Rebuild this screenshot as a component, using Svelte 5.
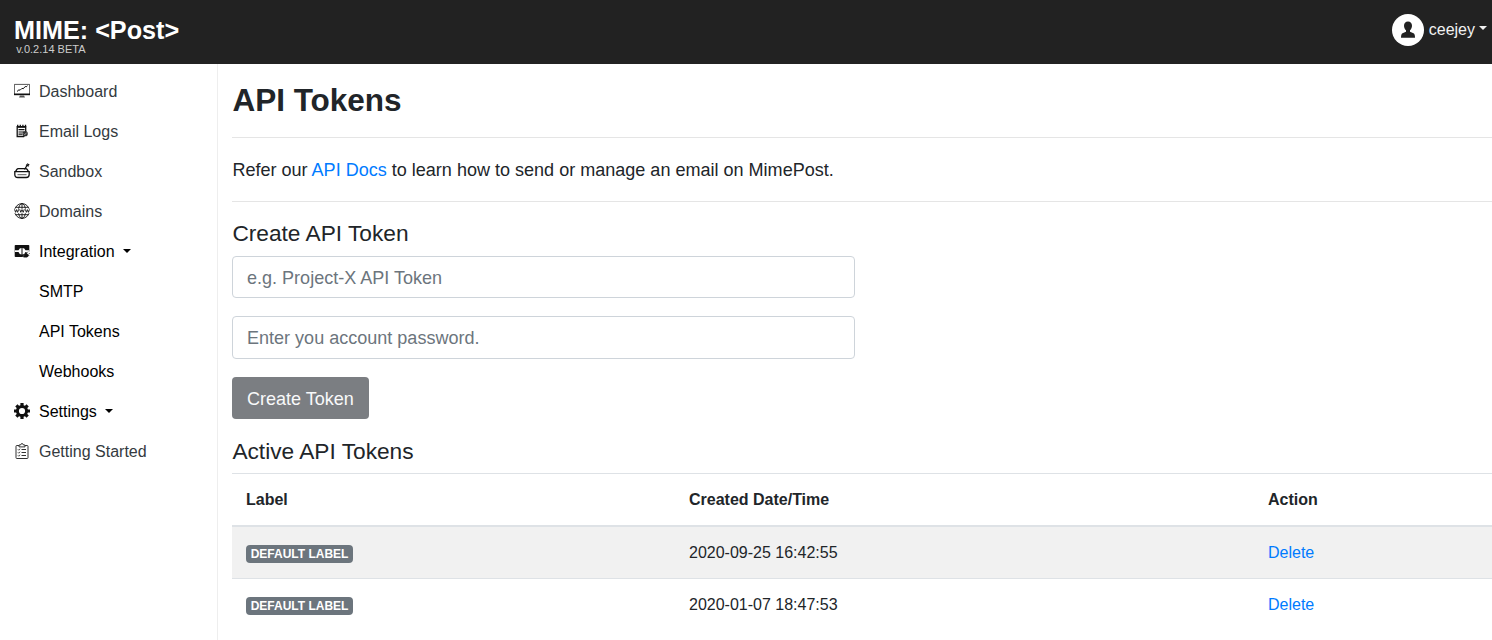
<script>
	let integrationOpen = $state(true);
	let label = $state('');
	let password = $state('');

	let tokens = $state([
		{ id: 1, label: 'DEFAULT LABEL', created: '2020-09-25 16:42:55' },
		{ id: 2, label: 'DEFAULT LABEL', created: '2020-01-07 18:47:53' }
	]);

	const links = [
		{ icon: 'dashboard', text: 'Dashboard' },
		{ icon: 'logs', text: 'Email Logs' },
		{ icon: 'sandbox', text: 'Sandbox' },
		{ icon: 'domains', text: 'Domains' }
	];
	const integrations = ['SMTP', 'API Tokens', 'Webhooks'];

	function removeToken(e, id) {
		e.preventDefault();
		tokens = tokens.filter((t) => t.id !== id);
	}
</script>

{#snippet icon(name)}
	<svg class="icon" viewBox="0 0 16 16" width="16" height="16" fill="none" stroke="currentColor">
		{#if name === 'dashboard'}
			<path d="M.4 11V1.4h15.2V11" stroke-width=".7" />
			<path d="M0 10.5h16v1.7H0z" fill="currentColor" stroke="none" />
			<path d="M3 8.5l2-1.8 1 .6 2-2 1.2.5 2-2.3 1 .3 1.3-1.1" stroke-width="1" />
			<path d="M6 12.5h4l1 2H5z" fill="#555" stroke="none" />
		{:else if name === 'logs'}
			<path d="M3.2 3.700h8.500v6.500l-2 3.300H3.200z" stroke-width="1.300" />
			<path d="M3.700 1.700v2.500M6.300 1.700v2.500M8.900 1.700v2.500M11.500 1.700v2.500" stroke-width="1.300" />
			<path d="M3.500 4.200h8M4.500 6.700h6M4.500 9h5.500M4.500 11.200h4" stroke-width="1.200" />
			<circle cx="11.200" cy="10.700" r="2.600" fill="#333" stroke="none" />
			<path d="M9.900 10.700l1 1 1.600-2" stroke="#ccc" stroke-width=".7" />
		{:else if name === 'sandbox'}
			<path d="M.8 8.700h14.400v2.800q0 3-3 3H3.800q-3 0-3-3z" stroke-width="1.300" />
			<path d="M1.500 8.700L2.700 6.700q.6-1 1.700-1h7.200q1.100 0 1.700 1l1.200 2" stroke-width="1.300" />
			<path d="M3.500 11.700h9" stroke-width=".7" />
			<path d="M10.500 6.500L13 2.500M12 1.700l2.700 1.500M13 .7l2.300 1.300" stroke-width="1.300" />
		{:else if name === 'domains'}
			<g stroke-width=".9">
				<circle cx="8" cy="8" r="7.400" />
				<ellipse cx="8" cy="8" rx="3.600" ry="7.400" />
				<path d="M8 .5v15M1.700 4.300h12.600M1.700 11.700h12.600" />
			</g>
			<path d="M0 5.800h16v4.400H0z" fill="#fff" stroke="none" />
			<path d="M.5 6.300l1.100 3 1-2.700 1 2.700 1.100-3M5.700 6.300l1.100 3 1.200-2.700 1.200 2.700 1.100-3M11.300 6.300l1.100 3 1-2.700 1 2.700 1.100-3" stroke-width=".9" />
		{:else if name === 'integration'}
			<rect x=".7" y="2" width="14.600" height="12" rx=".8" fill="currentColor" stroke="none" />
			<path d="M1 7.200h3.500Q5.500 5 7.500 5v6.500Q5.500 11.500 4.500 9H1zM15 7.200h-3.500Q10.500 5 8.500 5v6.500q2 0 3-2.500H15z" fill="#fff" stroke="none" />
			<path d="M8.500 14l5-5.500H16V16H8.500z" fill="#fff" stroke="none" />
			<path d="M9.500 14l1.200-2.500 1.500-1.500 2.500 2.500-1.500 1.500zM13 9.700l1-1M14.500 11.300l1-1" fill="currentColor" stroke-width=".9" />
		{:else if name === 'settings'}
			<circle cx="8" cy="8" r="4.600" stroke-width="3" />
			<path d="M8 0v3.500M8 12.500V16M0 8h3.500M12.500 8H16M2.350 2.350l2.500 2.500M11.150 11.150l2.500 2.500M2.350 13.650l2.500-2.500M11.150 4.850l2.500-2.500" stroke-width="3.200" />
		{:else if name === 'started'}
			<g stroke="#333" stroke-width="1">
				<path d="M5 2.500H2.800q-.8 0-.8.700v11.500q0 .8.800.8h10.400q.8 0 .8-.8V3.200q0-.7-.8-.7H11" />
				<path d="M5 3.900V2h1.500Q7 .5 8 .5T9.500 2H11v1.900z" />
				<path d="M7.500 6.500h4.500M7.500 9.500h4.500M7.500 12.500h4.500M4 6.500l.7.700L6 5.700M4 9.500l.7.700L6 8.700M4 12.500l.7.700 1.300-1.500" />
			</g>
		{/if}
	</svg>
{/snippet}

<div class="page">
	<header class="navbar">
		<a class="brand" href="#home">
			<span class="brand-name">MIME: &lt;Post&gt;</span>
			<small>v.0.2.14 BETA</small>
		</a>
		<button class="user">
			<svg class="avatar" viewBox="0 0 32 32" width="32" height="32">
				<circle cx="16" cy="16" r="16" fill="#fff" />
				<path d="M16 7.500c-2.500 0-4 1.700-4 4.200 0 1.800.8 3.500 2 4.500v1.600l-3.500 1.500C9.500 19.800 9 21 9 23.700h14c0-2.700-.5-3.900-1.500-4.400L18 17.800v-1.600c1.200-1 2-2.700 2-4.500 0-2.500-1.500-4.200-4-4.200z" fill="#222" />
			</svg>
			<span>ceejey</span>
			<span class="caret"></span>
		</button>
	</header>

	<div class="layout">
		<nav class="sidebar">
			{#each links as link}
				<a href="#{link.icon}">{@render icon(link.icon)}{link.text}</a>
			{/each}
			<button class="group" onclick={() => (integrationOpen = !integrationOpen)}>
				{@render icon('integration')}Integration <span class="caret"></span>
			</button>
			{#if integrationOpen}
				{#each integrations as item}
					<a class="sub" href="#integration">{item}</a>
				{/each}
			{/if}
			<button class="group">{@render icon('settings')}Settings <span class="caret"></span></button>
			<a href="#started">{@render icon('started')}Getting Started</a>
		</nav>

		<main>
			<h1>API Tokens</h1>
			<p class="intro">
				Refer our <a href="#docs">API Docs</a> to learn how to send or manage an email on MimePost.
			</p>

			<h2>Create API Token</h2>
			<form onsubmit={(e) => e.preventDefault()}>
				<input type="text" placeholder="e.g. Project-X API Token" bind:value={label} />
				<input type="password" placeholder="Enter you account password." bind:value={password} />
				<button class="create" disabled={!label || !password}>Create Token</button>
			</form>

			<h2 class="active-title">Active API Tokens</h2>
			<table>
				<thead>
					<tr>
						<th class="col-label">Label</th>
						<th class="col-date">Created Date/Time</th>
						<th>Action</th>
					</tr>
				</thead>
				<tbody>
					{#each tokens as token (token.id)}
						<tr>
							<td><span class="badge">{token.label}</span></td>
							<td>{token.created}</td>
							<td><a href="#delete" onclick={(e) => removeToken(e, token.id)}>Delete</a></td>
						</tr>
					{/each}
				</tbody>
			</table>
		</main>
	</div>
</div>

<style>
	.page {
		height: 640px;
		overflow: hidden;
		background: #fff;
		color: #212529;
		font-family: 'Liberation Sans', Arial, sans-serif;
		font-size: 16px;
		line-height: 24px;
	}

	.page * {
		box-sizing: border-box;
	}

	a {
		color: #007bff;
		text-decoration: none;
	}

	button {
		font: inherit;
		border: 0;
		background: none;
		cursor: pointer;
	}

	.navbar {
		height: 64px;
		background: #222;
		display: flex;
		align-items: flex-start;
		justify-content: space-between;
		padding: 14px 5px 0 14px;
	}

	.brand {
		display: flex;
		flex-direction: column;
		color: #fff;
	}

	.brand-name {
		font-size: 25.2px;
		font-weight: 700;
		line-height: 32px;
	}

	.brand small {
		font-size: 11px;
		line-height: 12px;
		color: #ccc;
		margin: -3px 0 0 2.2px;
	}

	.user {
		display: flex;
		align-items: center;
		color: #f1f1f1;
		padding: 0;
	}

	.avatar {
		margin-right: 5px;
	}

	.caret {
		border-top: 4.8px solid;
		border-left: 4.8px solid transparent;
		border-right: 4.8px solid transparent;
		margin-left: 8px;
		margin-top: -3px;
	}

	.user .caret {
		margin-left: 4px;
		margin-top: -4px;
	}

	.layout {
		display: flex;
		height: 576px;
	}

	.sidebar {
		width: 218.4px;
		flex: none;
		border-right: 1px solid #eee;
		padding-top: 7px;
	}

	.sidebar a,
	.group {
		display: flex;
		align-items: center;
		width: 100%;
		height: 40px;
		padding: 2px 0 0 14px;
		color: #343a40;
	}

	.sidebar .group,
	.sidebar .sub {
		color: #000;
	}

	.sidebar .sub {
		padding-left: 39px;
	}

	.icon {
		flex: none;
		margin: -2px 9px 0 0;
		color: #111;
	}

	main {
		flex: 1;
		padding-left: 14px;
	}

	h1 {
		margin: 0;
		height: 74px;
		padding-top: 17px;
		border-bottom: 1px solid #e5e5e5;
		font-size: 31.5px;
		line-height: 38px;
	}

	.intro {
		margin: 0;
		height: 64px;
		padding-top: 19px;
		border-bottom: 1px solid #e5e5e5;
		font-size: 18.05px;
		line-height: 27px;
	}

	h2 {
		margin: 18px 0 9px;
		font-size: 22.7px;
		font-weight: 500;
		line-height: 27px;
	}

	form {
		display: flex;
		flex-direction: column;
		align-items: flex-start;
		gap: 18px;
	}

	input {
		width: 623px;
		height: 42.4px;
		padding: 2px 13.6px 0;
		border: 1px solid #ced4da;
		border-radius: 4px;
		font: inherit;
		font-size: 18.04px;
	}

	input::placeholder {
		color: #6c757d;
		opacity: 1;
	}

	input[type='password'] {
		padding-top: 1px;
	}

	.create {
		height: 42px;
		padding: 2px 15.2px 0 14.6px;
		border-radius: 4px;
		background: #7b7e82;
		color: #f8f9fa;
		font-size: 18.04px;
	}

	.active-title {
		margin: 19.2px 0 8px;
	}

	table {
		width: 100%;
		border-collapse: collapse;
		table-layout: fixed;
	}

	th,
	td {
		height: 52px;
		padding: 0 13.6px;
		border-top: 1px solid #dee2e6;
		text-align: left;
	}

	th {
		height: 53px;
	}

	thead th {
		border-bottom: 2px solid #dee2e6;
	}

	.col-label {
		width: 443px;
	}

	.col-date {
		width: 579px;
	}

	tbody tr:nth-child(odd) {
		background: #f1f1f1;
	}

	.badge {
		display: block;
		width: 107px;
		height: 18px;
		margin-top: 2px;
		padding: 0 0 0 4.7px;
		border-radius: 4px;
		background: #6c757d;
		color: #fff;
		font-size: 12px;
		font-weight: 700;
		line-height: 18px;
		white-space: nowrap;
	}
</style>
